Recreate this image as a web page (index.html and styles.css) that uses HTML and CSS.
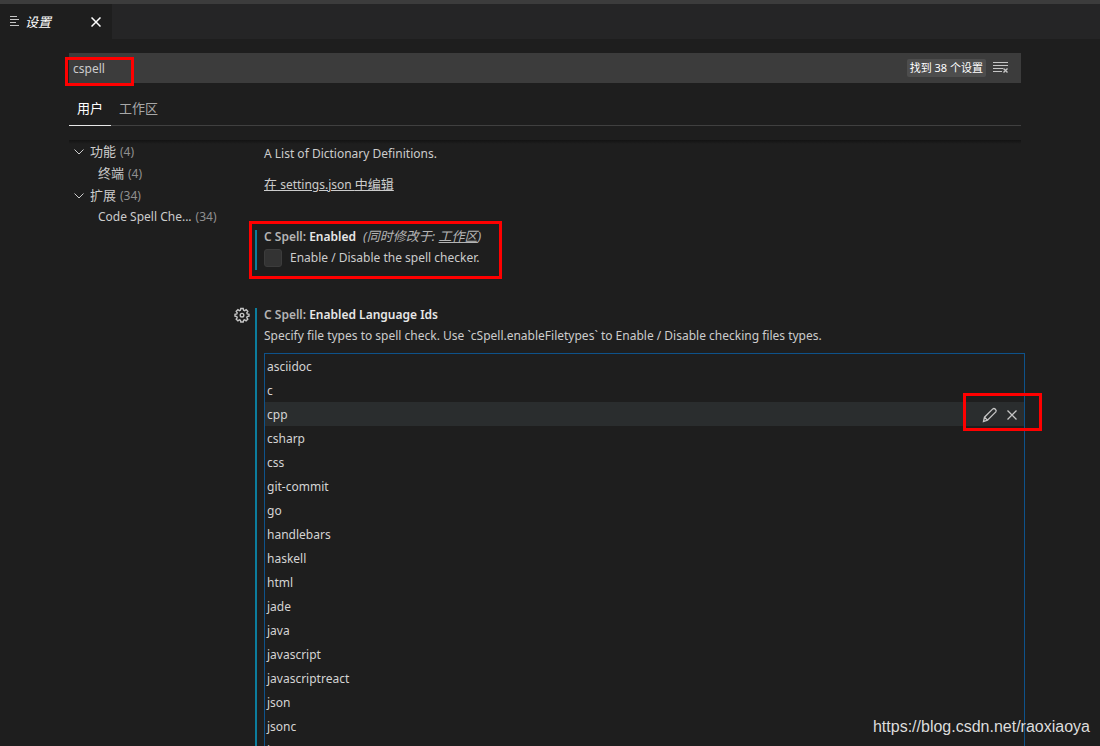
FILE: index.html
```html
<!DOCTYPE html>
<html lang="zh-CN">
<head>
<meta charset="utf-8">
<title>设置</title>
<link rel="stylesheet" href="styles.css">
</head>
<body>
<div class="titlebar"></div>
<header class="tabbar">
  <div class="tab">
    <svg class="tab-icon" width="9" height="11" viewBox="0 0 9 11" stroke="currentColor" shape-rendering="crispEdges"><path d="M0 .5h7M0 3.500h9M0 6.500h6M0 9.500h9"/></svg>
    <span class="tab-title">设置</span>
    <button class="icon-button tab-close" aria-label="关闭"><svg width="10" height="10" viewBox="0 0 10 10" stroke="currentColor" stroke-width="1.500"><path d="M.5.5l9 9M9.500.5l-9 9"/></svg></button>
  </div>
</header>
<main class="editor">
  <div class="search">
    <input class="search-input" type="text" value="cspell" aria-label="搜索设置">
    <span class="count">找到 38 个设置</span>
    <button class="icon-button clear" aria-label="清除搜索"><svg width="16" height="12" viewBox="0 0 16 12" fill="none" stroke="currentColor"><path d="M0 .5h15M0 3.500h15M0 6.500h10M0 9.500h9"/><path stroke-width="1.400" d="M10.500 6.500l4 4M14.500 6.500l-4 4"/></svg></button>
    <span class="mark mark-search"></span>
  </div>
  <nav class="scopes">
    <a class="scope active" href="#user">用户</a>
    <a class="scope" href="#workspace">工作区</a>
  </nav>
  <div class="body">
    <nav class="toc">
      <a class="toc-row" href="#features"><svg class="chevron" width="10" height="6" viewBox="0 0 10 6" fill="none" stroke="currentColor"><path d="M.5.5L5 5 9.500.5"/></svg><span class="cjk">功能</span><span class="num">(4)</span></a>
      <a class="toc-row child" href="#terminal"><span class="cjk">终端</span><span class="num">(4)</span></a>
      <a class="toc-row" href="#extensions"><svg class="chevron" width="10" height="6" viewBox="0 0 10 6" fill="none" stroke="currentColor"><path d="M.5.5L5 5 9.500.5"/></svg><span class="cjk">扩展</span><span class="num">(34)</span></a>
      <a class="toc-row child" href="#spell">Code Spell Che...<span class="num">(34)</span></a>
    </nav>
    <div class="settings">
      <section class="item definitions">
        <p class="text">A List of Dictionary Definitions.</p>
        <a class="edit-link" href="#json"><span class="cjk">在</span> settings.json <span class="cjk">中编辑</span></a>
      </section>
      <section class="item modified enabled">
        <h2 class="name">C Spell: <b>Enabled</b> <i class="scope-note cjk">(同时修改于: <a href="#workspace">工作区</a>)</i></h2>
        <label class="check"><input type="checkbox">Enable / Disable the spell checker.</label>
        <span class="mark mark-enabled"></span>
      </section>
      <section class="item modified languages">
        <button class="icon-button gear" aria-label="更多操作"><svg width="16" height="16" viewBox="0 0 16 16" fill="none" stroke="currentColor" stroke-width="1.400"><path d="M6.800 1.500h2.400l.4 1.800 1 .4 1.600-1 1.600 1.700-1 1.500.4 1 1.800.4v1.900l-1.800.4-.4 1 1 1.600-1.700 1.600-1.500-1-1 .4-.4 1.800H6.800l-.4-1.800-1-.4-1.500 1-1.700-1.600 1-1.600-.4-1L1 9.200V7.300l1.800-.4.4-1-1-1.500 1.700-1.700 1.500 1 1-.4z"/><circle cx="8" cy="8.200" r="1.800"/></svg></button>
        <h2 class="name">C Spell: <b>Enabled Language Ids</b></h2>
        <p class="text">Specify file types to spell check. Use `cSpell.enableFiletypes` to Enable / Disable checking files types.</p>
        <ul class="list">
          <li>asciidoc</li>
          <li>c</li>
          <li class="hover">cpp
            <span class="actions">
              <button class="icon-button" aria-label="编辑"><svg width="16" height="16" viewBox="0 0 16 16" fill="none" stroke="currentColor" stroke-width="1.300"><path d="M1.500 14.500l1-4.300 8.300-8.300q1.200-1 2.600.3t.4 2.700L5.500 13.200zM2.500 10.200l3 3"/></svg></button>
              <button class="icon-button" aria-label="删除"><svg width="10" height="10" viewBox="0 0 10 10" stroke="currentColor" stroke-width="1.300"><path d="M.5.5l9 9M9.500.5l-9 9"/></svg></button>
            </span>
            <span class="mark mark-actions"></span>
          </li>
          <li>csharp</li>
          <li>css</li>
          <li>git-commit</li>
          <li>go</li>
          <li>handlebars</li>
          <li>haskell</li>
          <li>html</li>
          <li>jade</li>
          <li>java</li>
          <li>javascript</li>
          <li>javascriptreact</li>
          <li>json</li>
          <li>jsonc</li>
          <li>jupyter</li>
        </ul>
      </section>
    </div>
  </div>
</main>
<div class="watermark">https://blog.csdn.net/raoxiaoya</div>
</body>
</html>
```
FILE: styles.css
```css
* { box-sizing: border-box; }
body {
  margin: 0;
  height: 100vh;
  display: flex;
  flex-direction: column;
  overflow: hidden;
  position: relative;
  background: #1e1e1e;
  color: #cccccc;
  font: 12px/18px "Noto Sans", "Noto Sans CJK SC", sans-serif;
}
a { color: inherit; }
.cjk { font-size: 13px; }
.icon-button {
  display: flex;
  align-items: center;
  justify-content: center;
  padding: 0;
  border: 0;
  background: none;
  color: #c5c5c5;
}
.titlebar { flex: none; height: 4px; background: #3c3c3c; }
.tabbar { flex: none; display: flex; height: 35px; background: #252526; }
.tab {
  display: flex;
  align-items: center;
  width: 112px;
  padding: 0 11px 0 10px;
  background: #1e1e1e;
  color: #fff;
}
.tab-icon { color: #c5c5c5; }
.tab-title { margin-left: 6px; font-size: 13px; font-style: italic; }
.tab-close { margin-left: auto; color: #fff; }
.editor {
  flex: 1;
  min-height: 0;
  display: flex;
  flex-direction: column;
  padding: 14px 75px 0 69px;
}
.search {
  position: relative;
  flex: none;
  display: flex;
  align-items: center;
  height: 30px;
  margin-right: 4px;
  padding-right: 12px;
  background: #3c3c3c;
}
.search-input {
  flex: 1;
  min-width: 0;
  height: 30px;
  padding: 0 4px;
  border: 0;
  outline: 0;
  background: none;
  color: #ccc;
  font: inherit;
}
.count {
  padding: 0 3px;
  margin-right: 7px;
  border-radius: 2px;
  background: #4d4d4d;
  color: #fff;
  font-size: 11px;
}
.mark { position: absolute; border: 3px solid #f00; pointer-events: none; }
.mark-search { left: -4px; top: 4px; width: 69px; height: 29px; }
.scopes {
  flex: none;
  display: flex;
  height: 43px;
  margin-right: 4px;
  padding-top: 9px;
  border-bottom: 1px solid #404040;
  font-size: 13px;
}
.scope {
  padding: 7px 8px 0;
  height: 34px;
  color: #a8a8a8;
  text-decoration: none;
}
.scope.active { border-bottom: 1px solid #e7e7e7; color: #fff; }
.body {
  flex: 1;
  min-height: 0;
  display: grid;
  grid-template-columns: 160px minmax(0, 1fr);
  margin-top: 14px;
  background: linear-gradient(#131313, #1e1e1e) 0 0 / calc(100% - 4px) 4px no-repeat;
}
.toc-row {
  display: flex;
  align-items: baseline;
  height: 22px;
  padding: 2px 0 0 5px;
  text-decoration: none;
  white-space: nowrap;
}
.toc-row.child { padding-left: 29px; }
.chevron { align-self: center; margin-right: 6px; }
.num { margin-left: 4px; color: #909090; }
.settings { line-height: 20px; }
.item { position: relative; padding-left: 35px; }
.definitions { height: 87px; padding-top: 4px; }
.text { margin: 0; }
.edit-link { display: inline-block; margin-top: 10px; }
.enabled { height: 78px; }
.modified::before {
  content: "";
  position: absolute;
  left: 26px;
  top: 3px;
  width: 2px;
  height: 40px;
  background: #0c7d9d;
}
.languages::before { height: auto; bottom: 0; }
.name { height: 20px; margin: 0 0 1px; font-size: 12px; font-weight: 600; color: #b4b4b4; }
.name b { font-weight: 600; color: #e7e7e7; }
.scope-note { margin-left: 4px; font-weight: 400; line-height: 18px; }
.check { display: flex; align-items: center; gap: 8px; }
.check input {
  appearance: none;
  width: 18px;
  height: 18px;
  margin: 0;
  border: 1px solid #3c3c3c;
  border-radius: 3px;
  background: #333;
}
.mark-enabled { left: 20px; top: -6px; width: 253px; height: 58px; }
.gear { position: absolute; left: 5px; top: 2px; }
.list {
  list-style: none;
  margin: 7px 0 0;
  padding: 0;
  border: 1px solid #0e528a;
  color: #d4d4d4;
}
.list li { position: relative; display: flex; justify-content: space-between; padding: 3px 2px 1px; }
.list .hover { background: #2a2d2e; }
.actions { display: flex; align-items: center; gap: 9px; padding-right: 5px; }
.mark-actions { right: -18px; top: -9px; width: 79px; height: 38px; }
.watermark {
  position: absolute;
  right: 10px;
  bottom: 10px;
  color: #dcdcdc;
  font: 16px/18px "Liberation Sans", sans-serif;
}
```
